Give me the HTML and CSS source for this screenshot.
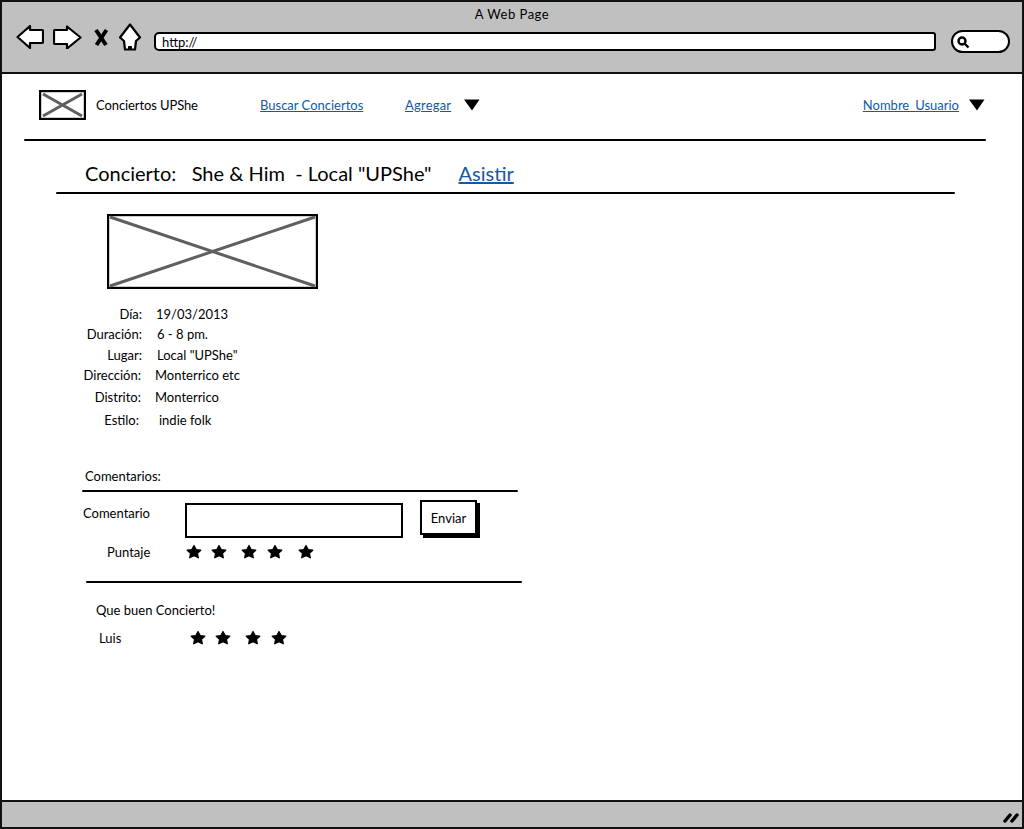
FILE: index.html
```html
<!DOCTYPE html>
<html lang="en">
<head>
	<meta charset="UTF-8">
	<title>A Web Page</title>
	<link rel="stylesheet" href="styles.css">
</head>
<body>
	<svg class="defs" width="0" height="0">
		<symbol id="star" viewBox="0 0 16 15">
			<path d="M8 1.500l2.200 4 4.600.7-3.300 3.200.8 4.400L8 11.700l-4.300 2.100.8-4.400-3.300-3.200 4.600-.7z"/>
		</symbol>
		<symbol id="caret" viewBox="0 0 16 12">
			<path d="M0 .5h15.500L8 11.500z"/>
		</symbol>
	</svg>
	<div id="wrapper">
		<div class="toolbar">
			<div class="window-title">A Web Page</div>
			<div class="toolbar-row">
				<svg class="icon icon-back" width="28" height="24" viewBox="0 0 28 24"><path d="M1.500 12L14 1v4h12q1 0 1 1v11q0 1-1 1H14v5z"/></svg>
				<svg class="icon icon-forward" width="29" height="24" viewBox="0 0 29 24"><path d="M27.500 12.500L14 1.500V5H2q-1 0-1 1v12q0 1 1 1h12v4.500z"/></svg>
				<svg class="icon icon-close" width="15" height="19" viewBox="0 0 15 19"><path d="M2 2l10 15M12.500 2L2.500 17"/></svg>
				<svg class="icon icon-home" width="23" height="28" viewBox="0 0 23 28"><path d="M11 1.500L1 14.500l4 3.500 1 8.500h10l1-8.500 4-3.500z"/><path class="door" d="M9.500 26.500v-3h3v3z"/></svg>
				<div class="url-bar">http://</div>
				<div class="search-box">
					<svg width="14" height="14" viewBox="0 0 14 14"><circle cx="6" cy="6" r="3.500"/><path d="M8.500 8.500l4 4"/></svg>
				</div>
			</div>
		</div>

		<div class="content">
			<div class="nav">
				<svg class="logo" width="47" height="30" viewBox="0 0 47 30"><rect x="1" y="1" width="45" height="28"/><path d="M4 4l39 22M43 4L4 26"/></svg>
				<span class="brand">Conciertos UPShe</span>
				<a class="link link-search" href="#">Buscar Conciertos</a>
				<a class="link link-add" href="#">Agregar</a>
				<svg class="caret" width="16" height="12"><use href="#caret"/></svg>
				<a class="link link-user" href="#">Nombre_Usuario</a>
				<svg class="caret" width="16" height="12"><use href="#caret"/></svg>
			</div>
			<div class="rule rule-nav"></div>

			<div class="heading">
				<span>Concierto:   She &amp; Him  - Local "UPShe"</span>
				<a class="link" href="#">Asistir</a>
			</div>
			<div class="rule rule-heading"></div>

			<svg class="photo" width="211" height="75" viewBox="0 0 211 75"><rect x="1" y="1" width="209" height="73"/><path d="M3 3l205 69M208 3L3 72"/></svg>

			<div class="details">
				<div class="detail"><span class="detail-label">Día:</span><span>19/03/2013</span></div>
				<div class="detail"><span class="detail-label">Duración:</span><span>6 - 8 pm.</span></div>
				<div class="detail"><span class="detail-label">Lugar:</span><span>Local "UPShe"</span></div>
				<div class="detail"><span class="detail-label">Dirección:</span><span>Monterrico etc</span></div>
				<div class="detail"><span class="detail-label">Distrito:</span><span>Monterrico</span></div>
				<div class="detail"><span class="detail-label">Estilo:</span><span>indie folk</span></div>
			</div>

			<div class="comments">
				<div class="comments-title">Comentarios:</div>
				<div class="rule rule-comments"></div>
				<div class="comment-form">
					<span class="form-label">Comentario</span>
					<div class="comment-input"></div>
					<div class="send-btn">Enviar</div>
				</div>
				<div class="score">
					<span class="score-label">Puntaje</span>
					<div class="stars">
						<svg width="16" height="15"><use href="#star"/></svg>
						<svg width="16" height="15"><use href="#star"/></svg>
						<svg width="16" height="15"><use href="#star"/></svg>
						<svg width="16" height="15"><use href="#star"/></svg>
						<svg width="16" height="15"><use href="#star"/></svg>
					</div>
				</div>
				<div class="rule rule-form"></div>
				<div class="comment-text">Que buen Concierto!</div>
				<div class="comment-meta">
					<span class="comment-author">Luis</span>
					<div class="stars">
						<svg width="16" height="15"><use href="#star"/></svg>
						<svg width="16" height="15"><use href="#star"/></svg>
						<svg width="16" height="15"><use href="#star"/></svg>
						<svg width="16" height="15"><use href="#star"/></svg>
					</div>
				</div>
			</div>
		</div>

		<div class="statusbar">
			<svg width="16" height="14" viewBox="0 0 16 14"><path d="M2 12l5-6M9 12l5-6"/></svg>
		</div>
	</div>
</body>
</html>
```

FILE: styles.css
```css
html, body {
	margin: 0;
	padding: 0;
}
body {
	background-color: #fff;
	color: #000;
	font-family: "Lato", "Noto Sans", sans-serif;
	font-size: 13px;
}
a {
	color: #15599f;
}
.defs {
	position: absolute;
}
#wrapper {
	box-sizing: border-box;
	width: 1024px;
	height: 829px;
	border: 2px solid #111;
	display: flex;
	flex-direction: column;
	overflow: hidden;
}

/* browser chrome */
.toolbar {
	height: 70px;
	flex: none;
	background-color: #c0c0c0;
	border-bottom: 2px solid #111;
}
.window-title {
	text-align: center;
	line-height: 16px;
	padding-top: 4px;
	letter-spacing: 0.5px;
}
.toolbar-row {
	display: flex;
	align-items: center;
	height: 32px;
	padding-left: 14px;
	margin-top: -1px;
}
.icon path {
	fill: #fff;
	stroke: #000;
	stroke-width: 2.2;
	stroke-linejoin: round;
}
.icon-back {
	margin-right: 9px;
}
.icon-forward {
	margin-right: 12px;
}
.icon-close {
	margin-right: 10px;
}
.icon-close path {
	fill: none;
	stroke-width: 4;
}
.icon-home {
	margin-right: 12px;
}
.icon-home .door {
	fill: #000;
	stroke-width: 1;
}
.url-bar {
	box-sizing: border-box;
	width: 782px;
	height: 19px;
	line-height: 16px;
	margin-top: 8px;
	padding-left: 6px;
	background-color: #fff;
	border: 2px solid #000;
	border-radius: 5px 3px 3px 5px;
}
.search-box {
	box-sizing: border-box;
	width: 59px;
	height: 23px;
	margin-left: 15px;
	margin-top: 8px;
	padding: 3px 0 0 3px;
	background-color: #fff;
	border: 2px solid #000;
	border-radius: 12px;
}
.search-box svg {
	display: block;
}
.search-box circle, .search-box path {
	fill: none;
	stroke: #000;
	stroke-width: 2.4;
}

/* page */
.content {
	flex: 1;
}
.nav {
	display: flex;
	align-items: center;
	height: 30px;
	padding: 16px 37px 0 37px;
}
.brand {
	margin-left: 10px;
	width: 164px;
	letter-spacing: -0.1px;
}
.link-search {
	width: 145px;
}
.link-add {
	margin-right: 13px;
	letter-spacing: 0.2px;
}
.link-user {
	margin-left: auto;
	margin-right: 10px;
}
.logo rect, .photo rect {
	fill: #fff;
	stroke: #000;
	stroke-width: 2.4;
}
.logo path, .photo path {
	stroke: #5f5f5f;
	stroke-width: 3;
	fill: none;
}
.rule {
	height: 2px;
	background-color: #000;
	border-radius: 1px;
}
.rule-nav {
	width: 962px;
	margin: 19px 0 0 22px;
}
.heading {
	display: flex;
	height: 38px;
	align-items: center;
	padding-left: 83px;
	font-size: 20px;
	white-space: pre;
	margin-top: 13px;
}
.heading .link {
	margin-left: 27px;
}
.rule-heading {
	width: 899px;
	margin: 0 0 0 54px;
}
.photo {
	display: block;
	margin: 20px 0 0 105px;
}
.details {
	margin-top: 15px;
}
.detail {
	display: flex;
	height: 20.500px;
	align-items: center;
}
.detail:first-child {
	height: 20px;
}
.detail-label {
	width: 140px;
	margin-right: 14px;
	text-align: right;
}
.detail:nth-child(2) span:last-child,
.detail:nth-child(3) span:last-child {
	margin-left: 1px;
}
.detail:nth-child(4) .detail-label,
.detail:nth-child(5) .detail-label {
	width: 139px;
}
.detail:nth-child(5) {
	height: 22px;
}
.detail:nth-child(6) {
	height: 24px;
}
.detail:nth-child(6) .detail-label {
	width: 137px;
	margin-right: 20px;
}

.comments {
	margin-top: 36.500px;
}
.comments-title {
	padding-left: 83px;
	line-height: 16px;
}
.rule-comments {
	width: 436px;
	margin: 6px 0 0 80px;
}
.comment-form {
	display: flex;
	align-items: flex-start;
	margin-top: 9px;
	padding-left: 81px;
}
.form-label {
	width: 102px;
	margin-top: 4px;
}
.comment-input {
	box-sizing: border-box;
	width: 218px;
	height: 35px;
	margin-top: 2px;
	border: 2px solid #000;
}
.send-btn {
	box-sizing: border-box;
	width: 57px;
	height: 35px;
	margin-left: 17px;
	margin-top: -1px;
	line-height: 33px;
	text-align: center;
	border: 2px solid #000;
	box-shadow: 3px 3px 0 #000;
}
.score {
	display: flex;
	align-items: center;
	margin-top: 6px;
	padding-left: 105px;
}
.score-label {
	width: 79px;
}
.stars {
	display: flex;
}
.score .stars {
	margin-top: -2px;
}
.stars svg {
	margin-right: 9px;
}
.stars use {
	stroke: #000;
	stroke-width: 1.2;
	stroke-linejoin: round;
}
.stars svg:nth-child(2) {
	margin-right: 14px;
}
.stars svg:nth-child(3) {
	margin-right: 10px;
}
.stars svg:nth-child(4) {
	margin-right: 15px;
}
.rule-form {
	width: 436px;
	margin: 21px 0 0 84px;
}
.comment-text {
	margin-top: 19px;
	padding-left: 94px;
	line-height: 16px;
}
.comment-meta {
	display: flex;
	align-items: center;
	margin-top: 12px;
	padding-left: 97px;
}
.comment-meta .stars {
	margin-top: -2px;
}
.comment-author {
	width: 91px;
}

.statusbar {
	box-sizing: border-box;
	height: 27px;
	flex: none;
	background-color: #c0c0c0;
	border-top: 2px solid #111;
	display: flex;
	justify-content: flex-end;
	align-items: center;
	padding: 2px 3px 0 0;
}
.statusbar path {
	stroke: #000;
	stroke-width: 3.5;
	stroke-linecap: round;
	fill: none;
}
```
